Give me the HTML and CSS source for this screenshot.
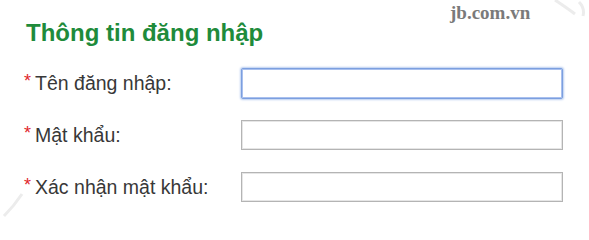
FILE: index.html
```html
<!DOCTYPE html>
<html lang="vi">
<head>
<meta charset="utf-8">
<title>Thông tin đăng nhập</title>
<link rel="stylesheet" href="styles.css">
</head>
<body>
<div class="page">
  <h2 class="title">Thông tin đăng nhập</h2>
  <form class="form">
    <label class="label" for="u"><span class="req">*</span>Tên đăng nhập:</label>
    <input class="field focus" id="u" type="text">
    <label class="label" for="p"><span class="req">*</span>Mật khẩu:</label>
    <input class="field" id="p" type="password">
    <label class="label" for="c"><span class="req">*</span>Xác nhận mật khẩu:</label>
    <input class="field" id="c" type="password">
  </form>
  <div class="wm-text">jb.com.vn</div>
  <svg class="wm-tr" width="40" height="30" viewBox="0 0 40 30"><path d="M6 0 Q18 8 26 14 M30 2 Q36 8 34 16" stroke="#ececec" stroke-width="3" fill="none"/></svg>
  <svg class="wm-bl" width="30" height="36" viewBox="0 0 30 36"><path d="M22 2 Q14 14 4 24" stroke="#ececec" stroke-width="3" fill="none"/></svg>
</div>
</body>
</html>
```
FILE: styles.css
```css
html, body {
  margin: 0;
  padding: 0;
  background: #fff;
}
.page {
  position: relative;
  width: 589px;
  height: 228px;
  padding: 19px 0 0 24px;
  box-sizing: border-box;
  overflow: hidden;
  font-family: "Liberation Sans", Arial, sans-serif;
}
.title {
  margin: 0 0 21px 2px;
  font-size: 24px;
  line-height: 28px;
  font-weight: bold;
  color: #1f8b3b;
}
.form {
  display: grid;
  grid-template-columns: 217px 322px;
  grid-auto-rows: 30px;
  row-gap: 22px;
  align-items: center;
}
.label {
  height: 30px;
  font-size: 19.5px;
  line-height: 30px;
  color: #383838;
  white-space: nowrap;
}
.req {
  color: #e0262b;
  font-size: 18px;
  line-height: 0;
  vertical-align: 3px;
  margin-right: 4px;
}
.field {
  display: block;
  box-sizing: border-box;
  width: 322px;
  height: 30px;
  margin: 0;
  padding: 0 4px;
  border: 1px solid #b4b4b4;
  box-shadow: inset 0 0 0 1px #e6e6e6;
  background: #fff;
  outline: none;
}
.field.focus {
  height: 31px;
  border: 1px solid #7c9fdf;
  border-radius: 2px;
  box-shadow: 0 0 2px 1px #b9cdf0, inset 0 0 0 1px #a9c0ee;
}
.wm-text {
  position: absolute;
  left: 450px;
  top: 2px;
  font-family: "Liberation Serif", "Times New Roman", serif;
  font-weight: bold;
  font-size: 19px;
  line-height: 22px;
  color: #7a7a7a;
}
.wm-tr {
  position: absolute;
  right: 0;
  top: 0;
}
.wm-bl {
  position: absolute;
  left: 0;
  bottom: 0;
}
```
